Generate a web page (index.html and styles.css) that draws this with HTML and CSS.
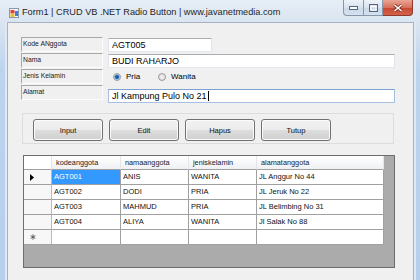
FILE: index.html
```html
<!DOCTYPE html>
<html lang="id">
<head>
  <meta charset="UTF-8">
  <title>Form1 | CRUD VB .NET Radio Button</title>
  <link rel="stylesheet" href="styles.css">
</head>
<body>
  <div class="window">
    <div class="titlebar">
      <svg class="app-icon" width="10" height="10" viewBox="0 0 10 10">
        <rect x="0.5" y="0.5" width="9" height="9" fill="#f4f6fa" stroke="#8a98ad"/>
        <rect x="1.5" y="2" width="4" height="3.5" fill="#e0452c"/>
        <rect x="1.5" y="6" width="4" height="3" fill="#f2c028"/>
        <rect x="6" y="3" width="3" height="5" fill="#3c7fd8"/>
      </svg>
      <span class="title">Form1 | CRUD VB .NET Radio Button | www.javanetmedia.com</span>
      <div class="caption-buttons">
        <span class="cap-btn min">
          <svg width="9" height="4" viewBox="0 0 9 4"><rect x="0.5" y="0.5" width="8" height="3" fill="#fff" stroke="#55657b"/></svg>
        </span>
        <span class="cap-btn max">
          <svg width="9" height="8" viewBox="0 0 9 8"><rect x="0.5" y="0.5" width="8" height="7" fill="none" stroke="#55657b"/><rect x="2" y="2.5" width="5" height="3.5" fill="none" stroke="#fff"/></svg>
        </span>
        <span class="cap-btn close">
          <svg width="10" height="8" viewBox="0 0 10 8"><path d="M1.5 1 L8.5 7 M8.5 1 L1.5 7" stroke="#7a2a1e" stroke-width="3"/><path d="M1.5 1 L8.5 7 M8.5 1 L1.5 7" stroke="#fff" stroke-width="1.6"/></svg>
        </span>
      </div>
    </div>

    <div class="client">
      <div class="form-rows">
        <div class="field">
          <label class="lbl">Kode ANggota</label>
          <div class="txt short">AGT005</div>
        </div>
        <div class="field">
          <label class="lbl">Nama</label>
          <div class="txt">BUDI RAHARJO</div>
        </div>
        <div class="field">
          <label class="lbl">Jenis Kelamin</label>
          <div class="radios">
            <span class="opt pria"><span class="radio checked"></span>Pria</span>
            <span class="opt"><span class="radio"></span>Wanita</span>
          </div>
        </div>
        <div class="field">
          <label class="lbl">Alamat</label>
          <div class="txt focus">Jl Kampung Pulo No 21<span class="caret"></span></div>
        </div>
      </div>

      <div class="btn-panel">
        <button class="btn">Input</button>
        <button class="btn">Edit</button>
        <button class="btn">Hapus</button>
        <button class="btn">Tutup</button>
      </div>

      <div class="dgv-wrap">
        <div class="dgv">
          <div class="hd corner"></div>
          <div class="hd">kodeanggota</div>
          <div class="hd">namaanggota</div>
          <div class="hd">jeniskelamin</div>
          <div class="hd">alamatanggota</div>

          <div class="rh"><svg width="4" height="7" viewBox="0 0 4 7"><path d="M0 0 L4 3.5 L0 7 Z" fill="#000"/></svg></div>
          <div class="cell selected">AGT001</div>
          <div class="cell">ANIS</div>
          <div class="cell">WANITA</div>
          <div class="cell">JL Anggur No 44</div>

          <div class="rh"></div>
          <div class="cell">AGT002</div>
          <div class="cell">DODI</div>
          <div class="cell">PRIA</div>
          <div class="cell">JL Jeruk No 22</div>

          <div class="rh"></div>
          <div class="cell">AGT003</div>
          <div class="cell">MAHMUD</div>
          <div class="cell">PRIA</div>
          <div class="cell">JL Belimbing No 31</div>

          <div class="rh"></div>
          <div class="cell">AGT004</div>
          <div class="cell">ALIYA</div>
          <div class="cell">WANITA</div>
          <div class="cell">Jl Salak No 88</div>

          <div class="rh"><svg width="6" height="6" viewBox="0 0 6 6"><path d="M3 0.3 V5.7 M0.6 1.6 L5.4 4.4 M5.4 1.6 L0.6 4.4" stroke="#555" stroke-width="0.9"/></svg></div>
          <div class="cell"></div>
          <div class="cell"></div>
          <div class="cell"></div>
          <div class="cell"></div>
        </div>
      </div>
    </div>
  </div>
</body>
</html>
```

FILE: styles.css
```css
body {
  margin: 0;
  font-family: "Liberation Sans", Arial, sans-serif;
  color: #000;
}
.window {
  width: 420px;
  height: 280px;
  overflow: hidden;
  display: flex;
  flex-direction: column;
  box-sizing: border-box;
  background: linear-gradient(#e6edf5, #dbe5f1 22px, #bdd4ee 70px, #b6cfec);
}

/* title bar */
.titlebar {
  height: 22px;
  display: flex;
  align-items: flex-start;
  flex-shrink: 0;
}
.app-icon {
  margin: 8px 0 0 9px;
}
.title {
  margin: 7px 0 0 3px;
  font-size: 9.2px;
  line-height: 11px;
  color: #1e1e1e;
}
.caption-buttons {
  margin-left: auto;
  margin-right: 7px;
  display: flex;
}
.cap-btn {
  height: 16px;
  display: flex;
  align-items: center;
  justify-content: center;
  box-sizing: border-box;
  border: 1px solid #8797ab;
  border-top: none;
}
.cap-btn.min {
  width: 20px;
  border-right: none;
  border-bottom-left-radius: 4px;
  background: linear-gradient(#eef3f9, #d8e3f0 50%, #c9d7e8 51%, #d5e1ef);
}
.cap-btn.max {
  width: 20px;
  background: linear-gradient(#eef3f9, #d8e3f0 50%, #c9d7e8 51%, #d5e1ef);
}
.cap-btn.close {
  width: 30px;
  border-left: none;
  border-color: #8c3b2d;
  border-bottom-right-radius: 4px;
  background: linear-gradient(#e9a595, #d8705c 50%, #c7462f 51%, #d4634b);
}

/* client area */
.client {
  flex: 1;
  margin: 0 6px 0 7px;
  border: 1px solid #a4b2c3;
  border-bottom: none;
  background: #f0f0f0;
  padding: 14px 0 0 13px;
  box-shadow: -2px 0 0 #dfe8f3, 2px 0 0 #dfe8f3;
}
.field {
  height: 16px;
  display: flex;
  align-items: flex-start;
  gap: 5px;
}
.lbl {
  width: 82px;
  height: 15px;
  box-sizing: border-box;
  border: 1px solid;
  border-color: #a8a8a8 #fdfdfd #fdfdfd #a8a8a8;
  padding-left: 1px;
  font-size: 6.8px;
  line-height: 11px;
  color: #1a1a1a;
}
.txt {
  width: 287px;
  height: 14px;
  margin-top: 1px;
  box-sizing: border-box;
  background: #fff;
  border: 1px solid;
  border-color: #abadb3 #e2e3ea #e3e9ef #e2e3ea;
  padding-left: 3px;
  font-size: 9px;
  line-height: 12px;
  white-space: nowrap;
}
.txt.short {
  width: 104px;
}
.field:last-child {
  height: 18px;
}
.txt.focus {
  margin-top: 4px;
  border-color: #7da2ce #a4c1e3 #a4c1e3 #a4c1e3;
}
.caret {
  display: inline-block;
  width: 1px;
  height: 10px;
  background: #000;
  vertical-align: -2px;
  margin-left: 1px;
}
.radios {
  display: flex;
  padding: 3px 0 0 5px;
  font-size: 8px;
  line-height: 9px;
}
.opt {
  display: flex;
  align-items: center;
  gap: 5px;
}
.opt.pria {
  width: 45px;
}
.radio {
  width: 8px;
  height: 8px;
  box-sizing: border-box;
  border-radius: 50%;
  border: 1px solid #9a9a9a;
  background: radial-gradient(circle, #f4f4f4, #d6d6d6);
}
.radio.checked {
  background: radial-gradient(circle, #1c5fa8 0 1.5px, #4e95dc 2px, #b9d6f3 2.8px, #e6e6e6 3.2px);
}

/* button panel */
.btn-panel {
  width: 372px;
  height: 31px;
  box-sizing: border-box;
  margin: 10px 0 0 1px;
  border: 1px solid #dcdcdc;
  padding: 5px 10px;
  display: flex;
  gap: 6px;
}
.btn {
  width: 70px;
  height: 22px;
  border: 1px solid #707070;
  border-radius: 3px;
  background: linear-gradient(#f2f2f2, #ebebeb 50%, #dddddd 51%, #cfcfcf);
  box-shadow: inset 0 0 0 1px #fbfbfb;
  font-family: inherit;
  font-size: 7.5px;
  color: #111;
  padding: 0;
}

/* data grid */
.dgv-wrap {
  width: 372px;
  height: 113px;
  box-sizing: border-box;
  margin: 11px 0 0 2px;
  border: 1px solid #6d6d6d;
  background: #ababab;
}
.dgv {
  display: grid;
  grid-template-columns: 28px 69px 68px 68px 127px;
  grid-template-rows: 14px;
  grid-auto-rows: 15px;
  width: max-content;
  font-size: 7.5px;
}
.dgv > div {
  box-sizing: border-box;
  border-right: 1px solid #a0a0a0;
  border-bottom: 1px solid #a0a0a0;
  white-space: nowrap;
  overflow: hidden;
}
.hd {
  background: linear-gradient(#ffffff, #f7f8fa 50%, #eef0f3);
  padding-left: 4px;
  line-height: 13px;
  font-size: 7.3px;
  color: #222;
  border-right-color: #e3e5e8 !important;
}
.hd.corner {
  background: #fff;
}
.rh {
  background: #f7f7f7;
  border-right-color: #b9b9b9 !important;
  display: flex;
  align-items: center;
  padding-left: 6px;
}
.cell {
  background: #fff;
  padding-left: 2px;
  line-height: 14px;
  color: #111;
}
.cell.selected {
  background: #3399ff;
  color: #fff;
}
```
